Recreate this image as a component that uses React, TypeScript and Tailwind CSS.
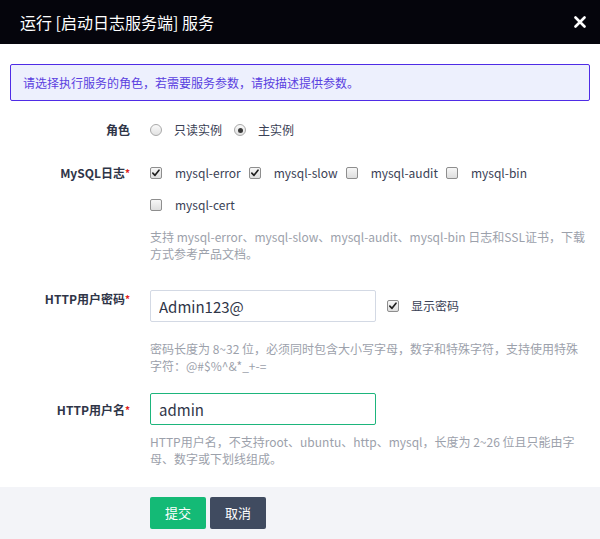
import React, { useState } from 'react';

const FONT = { fontFamily: '"Noto Sans CJK SC", "Noto Sans", sans-serif' };

function CheckBox({ checked }: { checked: boolean }) {
  return (
    <span className="w-3 h-3 shrink-0 rounded-[2px] border border-[#8e8e8e] bg-gradient-to-b from-[#f7f7f7] to-[#dedede] flex items-center justify-center">
      {checked && (
        <svg viewBox="0 0 12 12" className="w-[10px] h-[10px]">
          <path d="M2.2 6.2 L4.8 8.8 L9.6 2.6" fill="none" stroke="#1f1f1f" strokeWidth="2" strokeLinecap="round" strokeLinejoin="round" />
        </svg>
      )}
    </span>
  );
}

function Radio({ checked }: { checked: boolean }) {
  return (
    <span className="w-3 h-3 shrink-0 rounded-full border border-[#a9a9a9] bg-gradient-to-b from-[#fafafa] to-[#e2e2e2] flex items-center justify-center">
      {checked && <span className="w-[5px] h-[5px] rounded-full bg-[#3a3a3a]" />}
    </span>
  );
}

function Label({ text, required, className = '' }: { text: string; required?: boolean; className?: string }) {
  return (
    <div className={`w-[130px] shrink-0 text-right text-[12px] font-bold text-[#2f3547] leading-4 ${className}`}>
      {text}
      {required && <span className="text-[#e02020] text-[10px] align-top">*</span>}
    </div>
  );
}

export default function App() {
  const [role, setRole] = useState('master');
  const [logs] = useState<Record<string, boolean>>({
    'mysql-error': true,
    'mysql-slow': true,
    'mysql-audit': false,
    'mysql-bin': false,
    'mysql-cert': false,
  });

  return (
    <div className="w-[600px] h-[539px] bg-white overflow-hidden flex flex-col" style={FONT}>
      {/* Header */}
      <div className="h-[44px] shrink-0 bg-[#05050c] flex items-center justify-between pl-5 pr-[14px]">
        <span className="text-white text-[16px]">运行 [启动日志服务端] 服务</span>
        <svg viewBox="0 0 12 12" className="w-3 h-3">
          <path d="M1.5 1.5 L10.5 10.5 M10.5 1.5 L1.5 10.5" stroke="#ffffff" strokeWidth="2.6" strokeLinecap="round" />
        </svg>
      </div>

      {/* Alert */}
      <div className="mx-[10px] mt-5 h-[37px] shrink-0 rounded-[2px] border border-[#4f2ce6] bg-[#edf0fd] flex items-center px-3">
        <span className="text-[12px] text-[#5a3fe0]">请选择执行服务的角色，若需要服务参数，请按描述提供参数。</span>
      </div>

      {/* Role */}
      <div className="flex items-center h-6 mt-[17px]">
        <Label text="角色" />
        <div className="pl-5 flex items-center text-[12px] text-[#3a4155]">
          <button className="flex items-center gap-3 mr-3" onClick={() => setRole('readonly')}>
            <Radio checked={role === 'readonly'} />
            <span>只读实例</span>
          </button>
          <button className="flex items-center gap-3" onClick={() => setRole('master')}>
            <Radio checked={role === 'master'} />
            <span>主实例</span>
          </button>
        </div>
      </div>

      {/* MySQL logs */}
      <div className="flex mt-[15px]">
        <Label text="MySQL日志" required className="pt-2" />
        <div className="pl-5 flex-1">
          <div className="flex flex-wrap w-[436px] text-[12px] text-[#3a4155]">
            {Object.keys(logs).map((k) => (
              <label key={k} className="flex items-center h-8 gap-[13px] mr-[8px]">
                <CheckBox checked={logs[k]} />
                <span>{k}</span>
              </label>
            ))}
          </div>
          <p className="w-[436px] mt-[8px] text-[12px] leading-[16.5px] text-[#9ca1ab]">
            支持 mysql-error、mysql-slow、mysql-audit、mysql-bin 日志和SSL证书，下载方式参考产品文档。
          </p>
        </div>
      </div>

      {/* HTTP password */}
      <div className="flex mt-[28px]">
        <Label text="HTTP用户密码" required className="pt-[1px]" />
        <div className="pl-5 flex-1">
          <div className="flex items-center">
            <input
              defaultValue="Admin123@"
              className="w-[226px] h-[32px] border border-[#d3d9e4] rounded-[2px] px-2 text-[15px] text-[#2f3547] outline-none"
            />
            <label className="flex items-center gap-[12px] ml-[11px] text-[12px] text-[#3a4155]">
              <CheckBox checked />
              <span>显示密码</span>
            </label>
          </div>
          <p className="w-[436px] mt-[19px] text-[12px] leading-[16.5px] text-[#9ca1ab]">
            密码长度为 8~32 位，必须同时包含大小写字母，数字和特殊字符，支持使用特殊字符：@#$%^&*_+-=
          </p>
        </div>
      </div>

      {/* HTTP username */}
      <div className="flex mt-[19px]">
        <Label text="HTTP用户名" required className="pt-[9px]" />
        <div className="pl-5 flex-1">
          <input
            defaultValue="admin"
            className="w-[226px] h-[32px] border border-[#1db57c] rounded-[2px] px-2 text-[15px] text-[#2f3547] outline-none"
          />
          <p className="w-[436px] mt-[9px] text-[12px] leading-[16.5px] text-[#9ca1ab]">
            HTTP用户名，不支持root、ubuntu、http、mysql，长度为 2~26 位且只能由字母、数字或下划线组成。
          </p>
        </div>
      </div>

      {/* Footer */}
      <div className="mt-auto h-[52px] shrink-0 bg-[#f3f4f8] flex items-center pl-[150px] gap-1">
        <button className="w-[56px] h-[32px] rounded-[2px] bg-[#14ba76] text-white text-[13px]">提交</button>
        <button className="w-[56px] h-[32px] rounded-[2px] bg-[#404b60] text-white text-[13px]">取消</button>
      </div>
    </div>
  );
}
